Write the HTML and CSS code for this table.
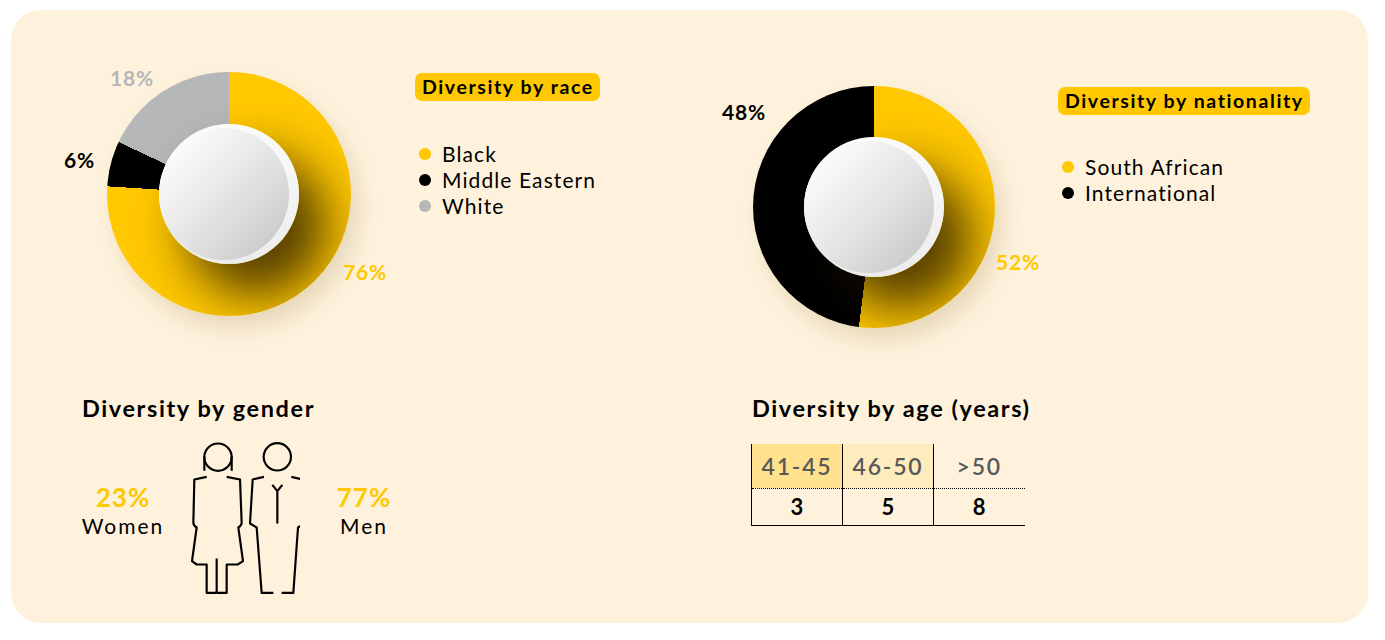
FILE: index.html
```html
<!DOCTYPE html>
<html lang="en">
<head>
<meta charset="utf-8">
<title>Diversity</title>
<link rel="stylesheet" href="styles.css">
</head>
<body>
<div class="card">
  <div class="col col-left">
    <div class="chart-row race-row">
      <div class="donut-wrap">
        <div class="donut donut-race">
          <div class="hub"><div class="sphere"></div></div>
        </div>
        <span class="pct pct-gray p18">18%</span>
        <span class="pct pct-black p6">6%</span>
        <span class="pct pct-yellow p76">76%</span>
      </div>
      <div class="legend">
        <div class="pill">Diversity by race</div>
        <ul class="items">
          <li><span class="dot dot-yellow"></span>Black</li>
          <li><span class="dot dot-black"></span>Middle Eastern</li>
          <li><span class="dot dot-gray"></span>White</li>
        </ul>
      </div>
    </div>
    <div class="section gender">
      <h2 class="title">Diversity by gender</h2>
      <div class="gender-body">
        <div class="stat stat-women">
          <div class="stat-pct">23%</div>
          <div class="stat-label">Women</div>
        </div>
        <svg class="people" viewBox="390 180 330 470" width="110" height="157" aria-hidden="true">
          <g fill="none" stroke="#000" stroke-width="6.5" stroke-linejoin="round" stroke-linecap="butt">
            <circle cx="474" cy="231" r="41"/>
            <path d="M433 228 V272 M515 228 V272"/>
            <path d="M440 290 L403 298 L400 428 Q400 436 410 442 L396 543 L410 553 L440 553 L440 638 L470 638"/>
            <path d="M500 290 L540 298 L545 428 Q545 436 535 442 L549 543 L533 553 L500 553 L500 638 L470 638"/>
            <path d="M470 535 V638"/>
            <circle cx="652" cy="230" r="41"/>
            <path d="M612 290 L578 298 L570 430 L590 442 L605 638 L640 638"/>
            <path d="M694 290 L727 298 L735 430 L714 442 L700 638 L665 638"/>
            <path d="M637 314 L652 333 L667 314 M652 333 V430"/>
          </g>
        </svg>
        <div class="stat stat-men">
          <div class="stat-pct">77%</div>
          <div class="stat-label">Men</div>
        </div>
      </div>
    </div>
  </div>
  <div class="col col-right">
    <div class="chart-row nat-row">
      <div class="donut-wrap">
        <div class="donut donut-nat">
          <div class="hub"><div class="sphere"></div></div>
        </div>
        <span class="pct pct-black p48">48%</span>
        <span class="pct pct-yellow p52">52%</span>
      </div>
      <div class="legend">
        <div class="pill">Diversity by nationality</div>
        <ul class="items">
          <li><span class="dot dot-yellow"></span>South African</li>
          <li><span class="dot dot-black"></span>International</li>
        </ul>
      </div>
    </div>
    <div class="section age">
      <h2 class="title">Diversity by age (years)</h2>
      <table class="age-table">
        <tr class="head">
          <td class="c1">41-45</td>
          <td class="c2">46-50</td>
          <td class="c3">&gt;50</td>
        </tr>
        <tr class="vals">
          <td>3</td>
          <td>5</td>
          <td>8</td>
        </tr>
      </table>
    </div>
  </div>
</div>
</body>
</html>
```
FILE: styles.css
```css
* { box-sizing: border-box; }
html, body { margin: 0; padding: 0; background: #ffffff; }
body {
  font-family: Lato, "Open Sans", "Liberation Sans", sans-serif;
  color: #000;
  width: 1385px;
  height: 640px;
  overflow: hidden;
}
.card {
  margin: 10px 0 0 11px;
  width: 1357px;
  height: 613px;
  background: #fef2dc;
  border-radius: 30px;
  display: grid;
  grid-template-columns: 689px 668px;
}
.col { display: flex; flex-direction: column; }
.chart-row { display: flex; align-items: flex-start; height: 330px; }
.race-row { padding: 62px 0 0 96px; }
.nat-row { padding: 76px 0 0 53px; }

.donut-wrap { position: relative; }
.donut {
  width: 244px;
  height: 244px;
  border-radius: 50%;
  overflow: hidden;
  display: flex;
  align-items: center;
  justify-content: center;
  box-shadow: 8px 12px 20px rgba(120, 85, 10, 0.16);
}
.donut-nat { width: 242px; height: 242px; }
.donut-race { background: conic-gradient(#ffc800 0 76%, #000 76% 82%, #b6b7b9 82% 100%); }
.donut-nat { background: conic-gradient(#ffc800 0 52%, #000 52% 100%); }
.hub {
  width: 140px;
  height: 140px;
  border-radius: 50%;
  background: linear-gradient(180deg, #fbfbfb, #ececec);
  box-shadow: 28px 32px 50px rgba(25, 15, 0, 0.74);
  display: flex;
  align-items: center;
  justify-content: flex-start;
}
.sphere {
  width: 130px;
  height: 132px;
  border-radius: 50%;
  background: linear-gradient(135deg, #ffffff 8%, #e6e6e6 50%, #c2c2c2 100%);
}

.pct {
  position: absolute;
  font-weight: 700;
  font-size: 21px;
  line-height: 22px;
  letter-spacing: 0.8px;
  white-space: nowrap;
}
.pct-gray { color: #b6b7b9; }
.pct-black { color: #000; }
.pct-yellow { color: #ffc800; }
.p18 { left: 3px; top: -5px; }
.p6 { left: -43px; top: 77px; }
.p76 { left: 236px; top: 189px; }
.p48 { left: -31px; top: 15px; }
.p52 { left: 243px; top: 165px; }

.legend { margin-top: 1px; }
.race-row .legend { margin-left: 64px; }
.nat-row .legend { margin-left: 63px; }
.pill {
  display: inline-block;
  background: #ffc800;
  border-radius: 7px;
  font-weight: 700;
  font-size: 19.5px;
  letter-spacing: 1.6px;
  line-height: 28px;
  height: 28px;
  padding: 0 6px 0 7px;
}
.items {
  list-style: none;
  margin: 40px 0 0 0;
  padding: 0;
}
.nat-row .items { margin-top: 39px; }
.items li {
  display: flex;
  align-items: center;
  font-size: 21px;
  letter-spacing: 1.1px;
  line-height: 26px;
  height: 26px;
}
.dot {
  width: 12px;
  height: 12px;
  border-radius: 50%;
  margin: 0 11px 0 4px;
}
.dot-yellow { background: #ffc800; }
.dot-black { background: #000; }
.dot-gray { background: #b6b7b9; }

.title {
  margin: 0;
  font-size: 23.5px;
  letter-spacing: 1.6px;
  line-height: 26px;
  font-weight: 700;
}
.section { margin-top: 55px; }
.gender { padding-left: 71px; }
.age { padding-left: 52px; }

.gender-body {
  display: flex;
  align-items: flex-start;
  margin-top: 19px;
  margin-left: -1px;
}
.stat { text-align: center; margin-top: 43px; }
.stat-women { width: 84px; }
.stat-men { width: 60px; margin-left: 34px; }
.people { margin-left: 25px; display: block; }
.stat-pct {
  color: #ffc800;
  font-weight: 700;
  font-size: 26px;
  letter-spacing: 1px;
  line-height: 28px;
}
.stat-label {
  font-size: 21px;
  letter-spacing: 2px;
  line-height: 29px;
}

.age-table {
  border-collapse: collapse;
  margin: 23px 0 0 -1px;
}
.age-table td {
  width: 91px;
  text-align: center;
  border-left: 1px solid #000;
  padding: 0;
}
.head td {
  height: 44px;
  color: #595959;
  font-size: 23px;
  letter-spacing: 1.8px;
  font-weight: 600;
  border-bottom: 1px dotted #000;
}
.head .c1 { background: #ffe18e; }
.head .c2 { background: #ffecbe; }
.vals td {
  height: 37px;
  font-size: 22px;
  font-weight: 700;
  border-bottom: 1px solid #000;
}
```
